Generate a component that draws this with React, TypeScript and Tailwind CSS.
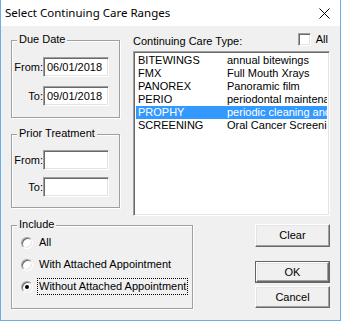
import React from 'react';

const sunken =
  'border border-t-[#a0a0a0] border-l-[#a0a0a0] border-r-white border-b-white shadow-[inset_1px_1px_0_#696969,inset_-1px_-1px_0_#e3e3e3]';
const raised =
  'border border-t-white border-l-white border-r-[#696969] border-b-[#696969] shadow-[inset_-1px_-1px_0_#a0a0a0,inset_1px_1px_0_#e3e3e3]';

const careTypes = [
  { code: 'BITEWINGS', desc: 'annual bitewings' },
  { code: 'FMX', desc: 'Full Mouth Xrays' },
  { code: 'PANOREX', desc: 'Panoramic film' },
  { code: 'PERIO', desc: 'periodontal maintenance' },
  { code: 'PROPHY', desc: 'periodic cleaning and exam' },
  { code: 'SCREENING', desc: 'Oral Cancer Screening' },
];

const GroupBox: React.FC<{ title: string; className: string; children: React.ReactNode }> = ({ title, className, children }) => (
  <div className={`relative border border-[#a0a0a0] shadow-[inset_1px_1px_0_#fff,1px_1px_0_#fff] ${className}`}>
    <span className="absolute -top-[8px] left-[5px] bg-[#f0f0f0] px-[2px] leading-[13px]">{title}</span>
    {children}
  </div>
);

const DateRow: React.FC<{ label: string; value?: string }> = ({ label, value }) => (
  <div className="flex h-[20px] items-center justify-end pr-[10px]">
    <span>{label}</span>
    <div className={`flex h-[20px] w-[66px] items-center bg-white pl-[3px] ${sunken}`}>{value}</div>
  </div>
);

const Radio: React.FC<{ label: string; checked?: boolean }> = ({ label, checked }) => (
  <div className="flex h-[19px] items-center">
    <div className={`flex h-[12px] w-[12px] items-center justify-center rounded-full bg-white ${sunken}`}>
      {checked && <div className="h-[4px] w-[4px] rounded-full bg-black" />}
    </div>
    <span
      className={`ml-[4px] border px-[1px] leading-[15px] ${checked ? 'border-dotted border-black' : 'border-transparent'}`}
    >
      {label}
    </span>
  </div>
);

export default function App() {
  return (
    <div
      className="flex h-[321px] w-[341px] flex-col overflow-hidden border-x border-b border-[#6aaeea] bg-[#f0f0f0] text-[11px] text-black"
      style={{ fontFamily: '"Liberation Sans", Arial, sans-serif' }}
    >
      <div className="flex h-[26px] shrink-0 items-center bg-white pl-[4px]">
        <span className="text-[11.5px]" style={{ fontFamily: '"Noto Sans", sans-serif' }}>
          Select Continuing Care Ranges
        </span>
        <svg className="ml-auto mr-[10px]" width="11" height="11" viewBox="0 0 11 11">
          <path d="M0.5 0.5 L10.5 10.5 M10.5 0.5 L0.5 10.5" stroke="#000" strokeWidth="1" />
        </svg>
      </div>

      <div className="flex flex-1 flex-col px-[10px] pt-[7px]">
        <div className="flex">
          <div className="w-[109px] shrink-0 pt-[7px]">
            <GroupBox title="Due Date" className="h-[78px]">
              <div className="flex flex-col gap-[9px] pt-[16px]">
                <DateRow label="From:" value="06/01/2018" />
                <DateRow label="To:" value="09/01/2018" />
              </div>
            </GroupBox>
            <GroupBox title="Prior Treatment" className="mt-[16px] h-[74px]">
              <div className="flex flex-col gap-[7px] pt-[15px]">
                <DateRow label="From:" />
                <DateRow label="To:" />
              </div>
            </GroupBox>
          </div>

          <div className="ml-[13px] w-[197px] min-w-0 shrink-0">
            <div className="flex h-[13px] items-start">
              <span className="pt-[2px] leading-[13px]">Continuing Care Type:</span>
              <div className={`ml-auto h-[13px] w-[13px] bg-white ${sunken}`} />
              <span className="ml-[5px] mr-[2px] leading-[13px]">All</span>
            </div>
            <div className={`mt-[5px] h-[165px] overflow-hidden bg-white p-[2px] ${sunken}`}>
              {careTypes.map((t) => (
                <div
                  key={t.code}
                  className={`flex h-[13px] items-center overflow-hidden leading-[13px] whitespace-nowrap ${
                    t.code === 'PROPHY' ? 'bg-[#3399ff] text-white' : ''
                  }`}
                >
                  <span className="w-[91px] shrink-0 pl-[2px]">{t.code}</span>
                  <span className="min-w-0 flex-1 overflow-hidden">{t.desc}</span>
                </div>
              ))}
            </div>
          </div>
        </div>

        <div className="mt-[8px] flex items-start">
          <GroupBox title="Include" className="mt-[1px] h-[84px] w-[182px]">
            <div className="flex flex-col gap-[3px] pl-[9px] pt-[7px]">
              <Radio label="All" />
              <Radio label="With Attached Appointment" />
              <Radio label="Without Attached Appointment" checked />
            </div>
          </GroupBox>
          <div className="ml-auto flex w-[75px] flex-col">
            <button className={`h-[23px] bg-[#f0f0f0] ${raised}`}>Clear</button>
            <button className="mt-[14px] h-[22px] border border-[#646464] bg-[#f0f0f0]">
              <div className={`flex h-full w-full items-center justify-center ${raised}`}>OK</div>
            </button>
            <button className={`mt-[3px] h-[22px] bg-[#f0f0f0] ${raised}`}>Cancel</button>
          </div>
        </div>
      </div>
    </div>
  );
}
